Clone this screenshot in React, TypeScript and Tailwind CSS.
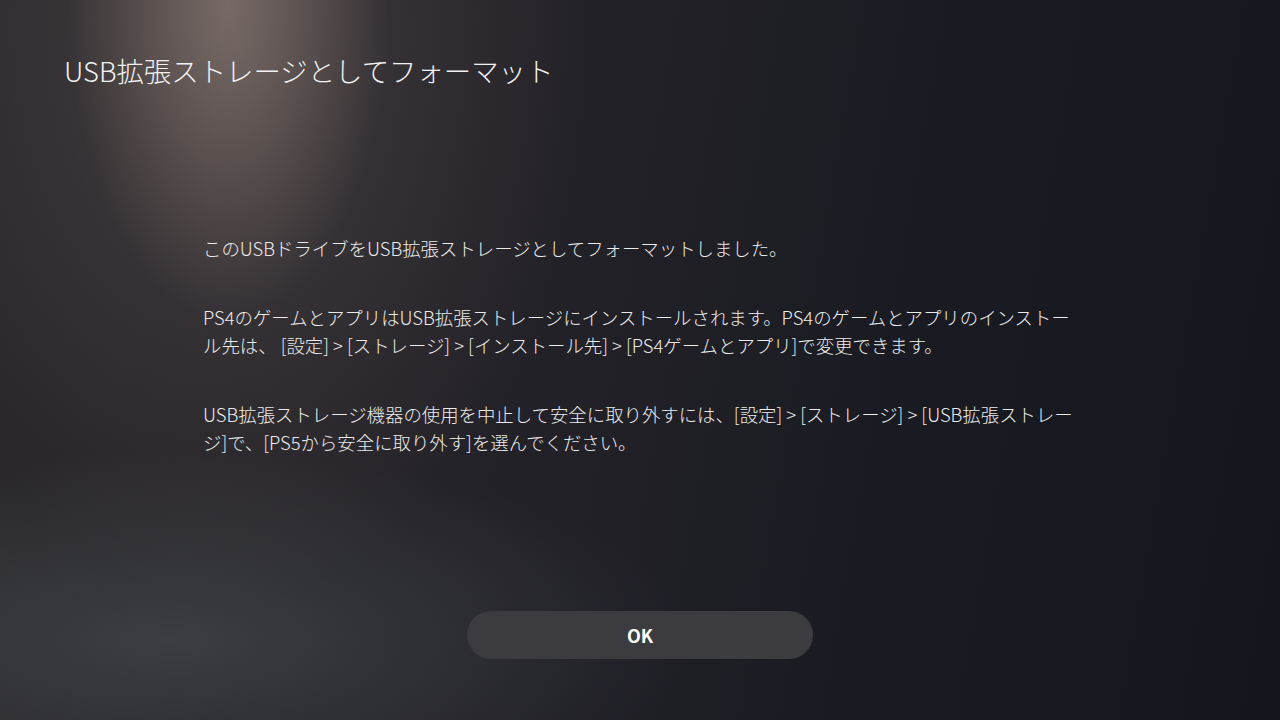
import React from "react";

export default function App() {
  return (
    <div
      className="relative flex h-[720px] w-[1280px] flex-col overflow-hidden text-[#ececec] bg-[radial-gradient(ellipse_160px_320px_at_228px_0px,rgba(165,145,135,0.55),transparent),radial-gradient(ellipse_360px_560px_at_230px_40px,rgba(120,105,100,0.35),transparent),radial-gradient(ellipse_520px_190px_at_170px_640px,rgba(85,92,98,0.45),transparent),linear-gradient(100deg,#29272b_0%,#232228_40%,#1a1b22_70%,#14161e_100%)]"
      style={{ fontFamily: '"Noto Sans CJK JP", "Noto Sans", sans-serif' }}
    >
      <h1 className="ml-[64px] mt-[50px] text-[27.4px] leading-[40px] font-light text-[#f2f2f2]">
        USB拡張ストレージとしてフォーマット
      </h1>

      <div className="ml-[203px] mt-[144px] flex flex-col gap-[41px] text-[18.4px] leading-[28px] font-light">
        <p>このUSBドライブをUSB拡張ストレージとしてフォーマットしました。</p>
        <p>
          PS4のゲームとアプリはUSB拡張ストレージにインストールされます。PS4のゲームとアプリのインストー
          <br />
          ル先は、 [設定] &gt; [ストレージ] &gt; [インストール先] &gt; [PS4ゲームとアプリ]で変更できます。
        </p>
        <p>
          USB拡張ストレージ機器の使用を中止して安全に取り外すには、[設定] &gt; [ストレージ] &gt; [USB拡張ストレー
          <br />
          ジ]で、[PS5から安全に取り外す]を選んでください。
        </p>
      </div>

      <div className="mt-[155px] flex justify-center">
        <button className="flex h-[48px] w-[346px] items-center justify-center rounded-full bg-[#3b3b40] text-[18px] font-bold text-white">
          OK
        </button>
      </div>
    </div>
  );
}
